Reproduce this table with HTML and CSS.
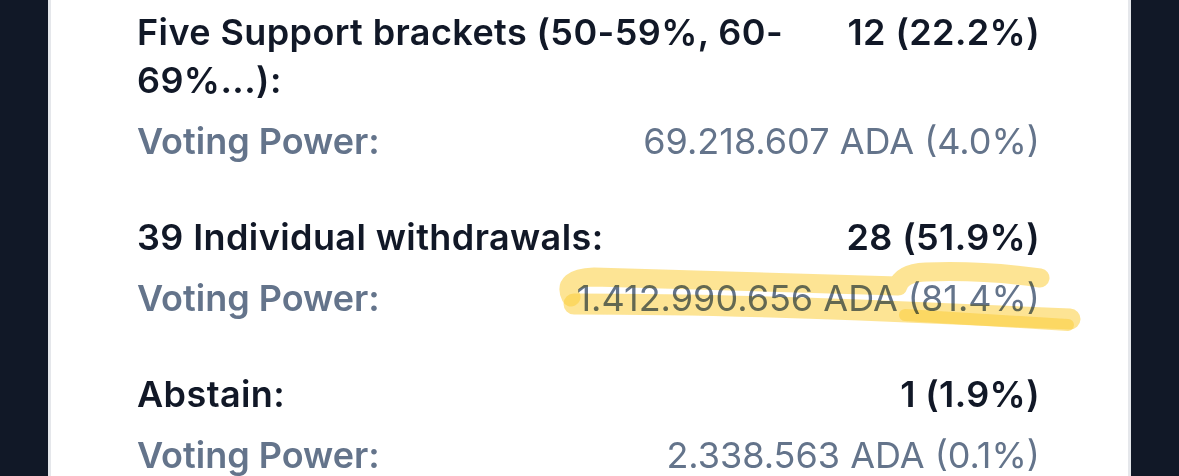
FILE: index.html
```html
<!DOCTYPE html>
<html lang="en">

<head>
    <meta charset="UTF-8">
    <meta name="viewport" content="width=device-width, initial-scale=1.0">
    <title>Vote Results</title>
    <link rel="stylesheet" href="styles.css">
</head>

<body>
    <div class="card">
        <div class="result">
            <div class="row">
                <span class="option">Five Support brackets (50-59%, 60-69%...):</span>
                <span class="count">12 (22.2%)</span>
            </div>
            <div class="row power">
                <span class="power-label">Voting Power:</span>
                <span class="power-value">69.218.607 ADA (4.0%)</span>
            </div>
        </div>

        <div class="result">
            <div class="row">
                <span class="option">39 Individual withdrawals:</span>
                <span class="count">28 (51.9%)</span>
            </div>
            <div class="row power">
                <span class="power-label">Voting Power:</span>
                <span class="power-value">1.412.990.656 ADA (81.4%)</span>
            </div>
        </div>

        <div class="result">
            <div class="row">
                <span class="option">Abstain:</span>
                <span class="count">1 (1.9%)</span>
            </div>
            <div class="row power">
                <span class="power-label">Voting Power:</span>
                <span class="power-value">2.338.563 ADA (0.1%)</span>
            </div>
        </div>
    </div>

    <!-- marker highlight drawn over the result -->
    <svg class="marker" viewBox="0 0 1179 476" width="1179" height="476">
        <path d="M571,297 Q562,278 594,277 L898,286 Q902,273 926,272 Q985,270 1040,278" />
        <path d="M574,304 Q700,304 860,310 L1070,319" class="wide" />
        <path d="M905,315 L1068,325" class="thin" />
    </svg>
</body>

</html>
```

FILE: styles.css
```css
body {
    margin: 0;
    padding: 0;
    background-color: #111827;
    font-family: Inter, "Noto Sans", sans-serif;
    position: relative;
    height: 476px;
    overflow: hidden;
}

.card {
    margin: 0 48px;
    height: 100%;
    background-color: white;
    border-left: 3px solid #e5e7eb;
    border-right: 3px solid #e5e7eb;
    padding: 8px 88px 0 86px;
    box-sizing: border-box;
}

.result {
    margin-bottom: 48px;
}

.row {
    display: flex;
    justify-content: space-between;
    align-items: flex-start;
    gap: 50px;
    font-size: 36px;
    line-height: 48px;
}

.row.power {
    margin-top: 13px;
}

.option,
.count {
    font-weight: 600;
    color: #111827;
    letter-spacing: 0.4px;
}

.count {
    white-space: nowrap;
}

.power-label {
    font-weight: 600;
    color: #64748b;
}

.power-value {
    font-weight: 400;
    color: #64748b;
    white-space: nowrap;
}

.marker {
    position: absolute;
    top: 0;
    left: 0;
    pointer-events: none;
    mix-blend-mode: multiply;
}

.marker path {
    fill: none;
    stroke: rgba(252, 206, 60, 0.55);
    stroke-width: 19;
    stroke-linecap: round;
    stroke-linejoin: round;
}

.marker path.wide {
    stroke-width: 21;
}

.marker path.thin {
    stroke-width: 12;
}
```
